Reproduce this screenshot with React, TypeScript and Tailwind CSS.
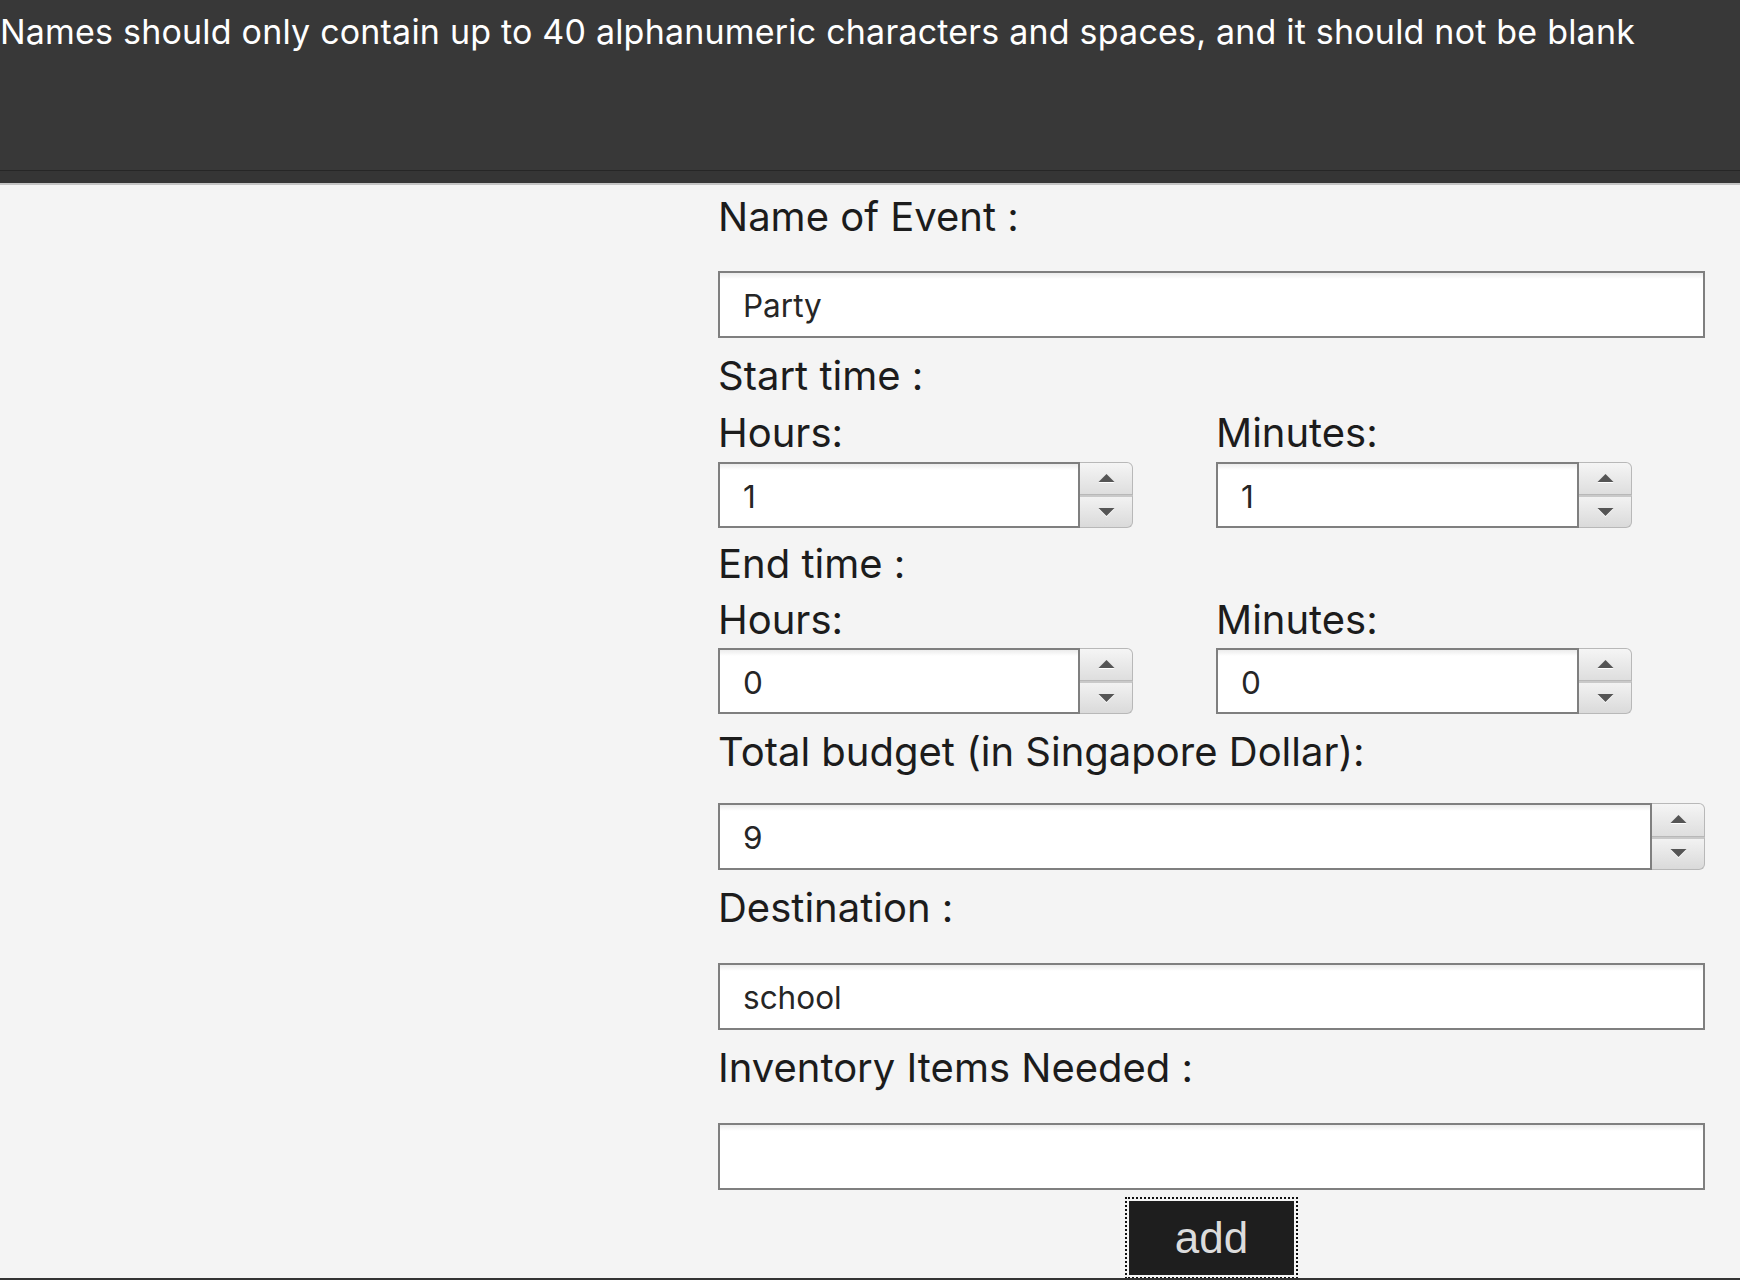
import React from "react";

const font = { fontFamily: "Inter, 'Noto Sans', sans-serif" };

function Arrow({ up }: { up: boolean }) {
  return (
    <svg width="17" height="11" viewBox="0 0 17 11">
      {up ? (
        <>
          <polygon points="8.5,1 16.5,9 0.5,9" fill="#ffffff" transform="translate(0,1)" />
          <polygon points="8.5,1 16.5,9 0.5,9" fill="#555555" />
        </>
      ) : (
        <>
          <polygon points="0.5,1 16.5,1 8.5,9" fill="#ffffff" transform="translate(0,1)" />
          <polygon points="0.5,1 16.5,1 8.5,9" fill="#555555" />
        </>
      )}
    </svg>
  );
}

function SpinButtons() {
  return (
    <div className="flex h-full w-[53px] shrink-0 flex-col">
      <div className="flex h-1/2 items-center justify-center rounded-tr-[6px] border border-[#b8b8b8] border-l-0 bg-gradient-to-b from-[#f5f5f5] to-[#dedede]">
        <Arrow up />
      </div>
      <div className="flex h-1/2 items-center justify-center rounded-br-[6px] border border-t-[2px] border-[#b8b8b8] border-t-[#c9c9c9] border-l-0 bg-gradient-to-b from-[#f2f2f2] to-[#dadada]">
        <Arrow up={false} />
      </div>
    </div>
  );
}

function TextBox({ value, className = "" }: { value: string; className?: string }) {
  return (
    <div
      className={`flex h-[67px] items-center border-2 border-[#7f7f7f] bg-white bg-gradient-to-b from-[#ececec] via-white to-white bg-[length:100%_12px] bg-no-repeat pl-[23px] pt-[3px] text-[31.5px] text-[#262626] ${className}`}
      style={font}
    >
      {value}
    </div>
  );
}

function Spinner({ value, width, className = "" }: { value: string; width: string; className?: string }) {
  return (
    <div className={`flex h-[66px] ${width} ${className}`}>
      <div
        className="flex flex-1 items-center border-2 border-[#7f7f7f] bg-white bg-gradient-to-b from-[#ececec] via-white to-white bg-[length:100%_12px] bg-no-repeat pl-[23px] pt-[3px] text-[31.5px] text-[#262626]"
        style={font}
      >
        {value}
      </div>
      <SpinButtons />
    </div>
  );
}

function Label({ children, className = "" }: { children: React.ReactNode; className?: string }) {
  return (
    <div className={`h-[48px] whitespace-nowrap text-[40px] leading-[48px] text-[#1c1c1c] ${className}`} style={font}>
      {children}
    </div>
  );
}

export default function App() {
  return (
    <div className="flex h-[1280px] w-[1740px] flex-col overflow-hidden bg-[#f4f4f4]">
      <div className="h-[170px] shrink-0 bg-[#383838] pt-[15px]">
        <div
          className="whitespace-nowrap text-[34px] leading-[34px] tracking-[0.2px] text-white"
          style={font}
        >
          Names should only contain up to 40 alphanumeric characters and spaces, and it should not be blank
        </div>
      </div>
      <div className="h-px shrink-0 bg-[#262626]" />
      <div className="h-[12px] shrink-0 bg-[#353535]" />
      <div className="h-[2px] shrink-0 bg-[#c4c4c4]" />
      <div className="flex-1 overflow-hidden">
        <div className="ml-[718px] w-[987px]">
          <Label className="mt-[8px]">Name of Event :</Label>
          <TextBox value="Party" className="mt-[30px]" />
          <Label className="mt-[14px]">Start time :</Label>
          <div className="grid grid-cols-[498px_1fr]">
            <div>
              <Label className="mt-[9px]">Hours:</Label>
              <Spinner value="1" width="w-[415px]" className="mt-[5px]" />
            </div>
            <div>
              <Label className="mt-[9px]">Minutes:</Label>
              <Spinner value="1" width="w-[416px]" className="mt-[5px]" />
            </div>
          </div>
          <Label className="mt-[12px]">End time :</Label>
          <div className="grid grid-cols-[498px_1fr]">
            <div>
              <Label className="mt-[8px]">Hours:</Label>
              <Spinner value="0" width="w-[415px]" className="mt-[4px]" />
            </div>
            <div>
              <Label className="mt-[8px]">Minutes:</Label>
              <Spinner value="0" width="w-[416px]" className="mt-[4px]" />
            </div>
          </div>
          <Label className="mt-[14px]">Total budget (in Singapore Dollar):</Label>
          <Spinner value="9" width="w-full" className="mt-[27px] !h-[67px]" />
          <Label className="mt-[14px]">Destination :</Label>
          <TextBox value="school" className="mt-[31px]" />
          <Label className="mt-[14px]">Inventory Items Needed :</Label>
          <TextBox value="" className="mt-[31px]" />
          <div className="mt-[7px] flex justify-center">
            <div className="border-[2px] border-dotted border-[#111] p-[2px]">
              <div
                className="flex h-[74px] w-[165px] items-center justify-center bg-[#1e1e1e] text-[44px] text-[#dcdcdc]"
                style={{ fontFamily: "'Liberation Sans', Arial, sans-serif" }}
              >
                add
              </div>
            </div>
          </div>
        </div>
      </div>
      <div className="h-[2px] shrink-0 bg-[#333]" />
    </div>
  );
}
